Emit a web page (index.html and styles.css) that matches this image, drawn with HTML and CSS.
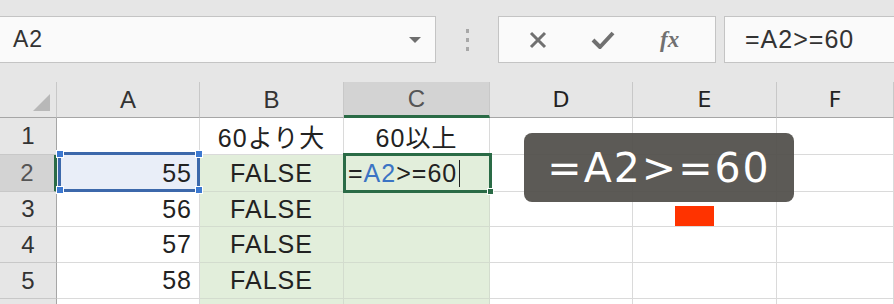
FILE: index.html
```html
<!DOCTYPE html>
<html lang="ja">
<head>
    <meta charset="UTF-8">
    <title>Excel 比較演算子</title>
    <link rel="stylesheet" href="styles.css">
</head>
<body>
    <div class="formula-bar">
        <div class="name-box">
            <span class="name-text">A2</span>
            <span class="dropdown"></span>
        </div>
        <div class="grip"><i></i><i></i><i></i></div>
        <div class="tool-box">
            <svg class="tool-icon" width="24" height="24" viewBox="0 0 24 24">
                <path d="M5 5 L19 19 M19 5 L5 19" stroke="#707070" stroke-width="3" fill="none"/>
            </svg>
            <svg class="tool-icon" width="26" height="24" viewBox="0 0 26 24">
                <path d="M3 12 L10 19 L23 5" stroke="#707070" stroke-width="4" fill="none" stroke-linejoin="round"/>
            </svg>
            <span class="fx">fx</span>
        </div>
        <div class="formula-box">=A2&gt;=60</div>
    </div>

    <div class="sheet">
        <div class="grid">
            <div class="corner"><span class="corner-tri"></span></div>
            <div class="col-head">A</div>
            <div class="col-head">B</div>
            <div class="col-head active">C</div>
            <div class="col-head alt">D</div>
            <div class="col-head alt">E</div>
            <div class="col-head alt">F</div>

            <div class="row-head">1</div>
            <div class="cell"></div>
            <div class="cell center">60より大</div>
            <div class="cell center">60以上</div>
            <div class="cell"></div>
            <div class="cell"></div>
            <div class="cell"></div>

            <div class="row-head active">2</div>
            <div class="cell num ref">55</div>
            <div class="cell center sel">FALSE</div>
            <div class="cell sel edit">=<span class="ref-text">A2</span>&gt;=60<span class="caret"></span></div>
            <div class="cell"></div>
            <div class="cell"></div>
            <div class="cell"></div>

            <div class="row-head">3</div>
            <div class="cell num">56</div>
            <div class="cell center sel">FALSE</div>
            <div class="cell sel"></div>
            <div class="cell"></div>
            <div class="cell"></div>
            <div class="cell"></div>

            <div class="row-head">4</div>
            <div class="cell num">57</div>
            <div class="cell center sel">FALSE</div>
            <div class="cell sel"></div>
            <div class="cell"></div>
            <div class="cell"></div>
            <div class="cell"></div>

            <div class="row-head">5</div>
            <div class="cell num">58</div>
            <div class="cell center sel">FALSE</div>
            <div class="cell sel"></div>
            <div class="cell"></div>
            <div class="cell"></div>
            <div class="cell"></div>

            <div class="row-head"></div>
            <div class="cell"></div>
            <div class="cell sel"></div>
            <div class="cell sel"></div>
            <div class="cell"></div>
            <div class="cell"></div>
            <div class="cell"></div>
        </div>

        <!-- 参照セル A2 の枠 -->
        <div class="ref-frame">
            <span class="handle tl"></span>
            <span class="handle tr"></span>
            <span class="handle bl"></span>
            <span class="handle br"></span>
        </div>
        <!-- アクティブセル C2 -->
        <div class="active-frame"><span class="fill-handle"></span></div>

        <div class="bubble">=A2&gt;=60</div>
        <div class="marker"></div>
    </div>
</body>
</html>
```

FILE: styles.css
```css
* {
    box-sizing: border-box;
}
body {
    margin: 0;
    width: 894px;
    height: 304px;
    overflow: hidden;
    background-color: #e6e6e6;
    font-family: "Liberation Sans", "Noto Sans CJK JP", sans-serif;
    color: #222;
}
.formula-bar {
    display: flex;
    align-items: center;
    height: 82px;
    padding-bottom: 3px;
}
.name-box {
    width: 436px;
    height: 47px;
    background-color: #fafafa;
    border: 1px solid #c4c4c4;
    border-left: none;
    display: flex;
    align-items: center;
    justify-content: space-between;
    padding: 0 14px 0 13px;
}
.name-text {
    font-size: 23px;
    letter-spacing: 1px;
    color: #333;
}
.dropdown {
    width: 0;
    height: 0;
    border-left: 6px solid transparent;
    border-right: 6px solid transparent;
    border-top: 6px solid #6e6e6e;
}
.grip {
    width: 62px;
    display: flex;
    flex-direction: column;
    align-items: center;
    gap: 5px;
}
.grip i {
    width: 3px;
    height: 4px;
    background-color: #a8a8a8;
}
.tool-box {
    width: 218px;
    height: 47px;
    background-color: #fafafa;
    border: 1px solid #c4c4c4;
    display: flex;
    align-items: center;
    padding-left: 27px;
    gap: 40px;
}
.fx {
    font-family: "Liberation Serif", serif;
    font-style: italic;
    font-weight: bold;
    font-size: 23px;
    color: #707070;
    margin-left: 4px;
}
.formula-box {
    flex: 1;
    margin-left: 8px;
    height: 47px;
    background-color: #fafafa;
    border: 1px solid #c4c4c4;
    border-right: none;
    display: flex;
    align-items: center;
    padding-left: 20px;
    font-size: 25px;
    letter-spacing: 1px;
    color: #333;
}
.sheet {
    position: relative;
}
.grid {
    display: grid;
    grid-template-columns: 57px 143px 144px 146px 143px 144px 117px;
    grid-template-rows: 36px 37px 37px 35px 36px 36px 10px;
    background-color: #fff;
}
.corner,
.col-head,
.row-head {
    background-color: #e6e6e6;
    border-right: 1px solid #c8c8c8;
    border-bottom: 1px solid #a6a6a6;
    font-size: 24px;
    color: #333;
    display: flex;
    align-items: center;
    justify-content: center;
}
.corner {
    position: relative;
}
.corner-tri {
    position: absolute;
    right: 6px;
    bottom: 6px;
    width: 0;
    height: 0;
    border-left: 17px solid transparent;
    border-bottom: 17px solid #b8b8b8;
}
.col-head.alt {
    font-family: "DejaVu Sans", sans-serif;
    font-size: 22px;
    color: #222;
}
.col-head.active {
    background-color: #d3d3d3;
    border-bottom: 3px solid #2a6b46;
    color: #555;
}
.row-head {
    border-bottom: 1px solid #c8c8c8;
    border-right: 1px solid #a6a6a6;
}
.row-head.active {
    background-color: #d3d3d3;
    border-right: 3px solid #2a6b46;
    color: #555;
}
.cell {
    border-right: 1px solid #dadada;
    border-bottom: 1px solid #dadada;
    font-size: 25px;
    letter-spacing: 1px;
    display: flex;
    align-items: center;
    padding: 0 7px;
    white-space: nowrap;
    overflow: hidden;
}
.cell.center {
    justify-content: center;
}
.cell.num {
    justify-content: flex-end;
}
.cell.sel {
    background-color: #e2eedb;
    border-color: #d3dcce;
}
.cell.ref {
    background-color: #e9eef8;
}
.cell.edit {
    padding-left: 4px;
    color: #222;
}
.ref-text {
    color: #3b74c4;
}
.caret {
    display: inline-block;
    width: 1px;
    height: 27px;
    background-color: #222;
    margin-left: 2px;
}
.ref-frame {
    position: absolute;
    left: 58px;
    top: 70px;
    width: 142px;
    height: 40px;
    border: 3px solid #3c68ab;
}
.handle {
    position: absolute;
    width: 8px;
    height: 8px;
    background-color: #3c78d0;
    border: 1px solid #fff;
}
.handle.tl { left: -5px; top: -5px; }
.handle.tr { right: -6px; top: -5px; }
.handle.bl { left: -5px; bottom: -5px; }
.handle.br { right: -6px; bottom: -5px; }
.active-frame {
    position: absolute;
    left: 343px;
    top: 71px;
    width: 149px;
    height: 40px;
    border: 3px solid #2a6b46;
}
.fill-handle {
    position: absolute;
    right: -5px;
    bottom: -5px;
    width: 7px;
    height: 7px;
    background-color: #2a6b46;
    border: 1px solid #fff;
}
.bubble {
    position: absolute;
    left: 524px;
    top: 51px;
    width: 270px;
    height: 69px;
    border-radius: 8px;
    background-color: rgba(80, 77, 73, 0.93);
    color: #fff;
    font-family: "DejaVu Sans", sans-serif;
    font-size: 41px;
    letter-spacing: 2px;
    display: flex;
    align-items: center;
    justify-content: center;
}
.marker {
    position: absolute;
    left: 675px;
    top: 124px;
    width: 39px;
    height: 20px;
    background-color: #ff3300;
}
```
